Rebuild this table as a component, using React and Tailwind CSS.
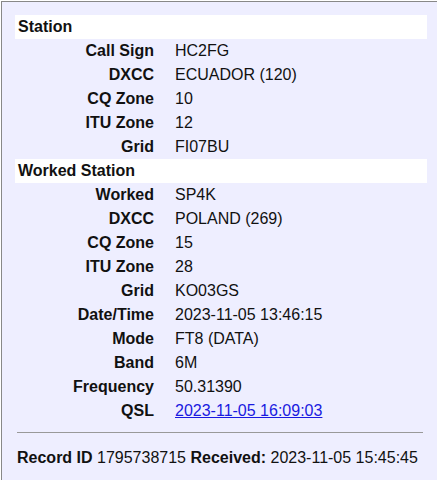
const station = [
    ["Call Sign", "HC2FG"],
    ["DXCC", "ECUADOR (120)"],
    ["CQ Zone", "10"],
    ["ITU Zone", "12"],
    ["Grid", "FI07BU"],
];

const worked = [
    ["Worked", "SP4K"],
    ["DXCC", "POLAND (269)"],
    ["CQ Zone", "15"],
    ["ITU Zone", "28"],
    ["Grid", "KO03GS"],
    ["Date/Time", "2023-11-05 13:46:15"],
    ["Mode", "FT8 (DATA)"],
    ["Band", "6M"],
    ["Frequency", "50.31390"],
];

function Header({ title }) {
    return (
        <div className="h-6 bg-white flex items-center pl-[3px] font-bold">
            {title}
        </div>
    );
}

function Row({ label, children }) {
    return (
        <div className="h-6 flex items-center">
            <div className="w-[139px] text-right font-bold">{label}</div>
            <div className="pl-[21px]">{children}</div>
        </div>
    );
}

export default function App() {
    return (
        <div
            className="w-[437px] h-[480px] overflow-hidden bg-white text-[16px] text-[#111] leading-none"
            style={{ fontFamily: '"Liberation Sans", Arial, sans-serif' }}
        >
            <div className="mt-px ml-px w-[460px] h-[500px] border-t border-l border-[#888] bg-[#eeeeff] pt-[13px] pl-[13px]">
                <div className="w-[412px]">
                    {/* Station */}
                    <Header title="Station" />
                    {station.map(([l, v]) => (
                        <Row key={l} label={l}>{v}</Row>
                    ))}

                    {/* Worked Station */}
                    <Header title="Worked Station" />
                    {worked.map(([l, v]) => (
                        <Row key={l} label={l}>{v}</Row>
                    ))}
                    <Row label="QSL">
                        <a href="#" className="text-[#1a1ae0] underline">2023-11-05 16:09:03</a>
                    </Row>

                    <div className="mt-[9px] ml-[2px] w-[406px] border-t border-[#999]" />

                    <div className="mt-[17px] pl-[2px]">
                        <span className="font-bold">Record ID</span> 1795738715{" "}
                        <span className="font-bold">Received:</span> 2023-11-05 15:45:45
                    </div>
                </div>
            </div>
        </div>
    );
}
